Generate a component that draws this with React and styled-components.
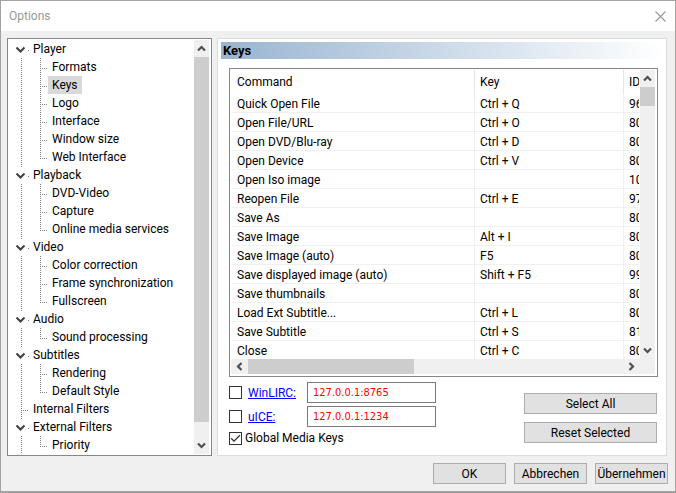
import React, { useState } from 'react'
import styled, { createGlobalStyle } from 'styled-components'

const GlobalStyle = createGlobalStyle`
  * {
    box-sizing: border-box;
  }
  body {
    margin: 0;
    background-color: #a3a09c;
    font-family: Roboto, 'Open Sans', sans-serif;
    font-size: 12px;
    line-height: 18px;
    color: black;
  }
`;
const Dialog = styled.main`
  display: flex;
  flex-direction: column;
  border: 1px solid #a5a3a2;
  background-color: #f0f0f0;
`;
const TitleBar = styled.header`
  display: flex;
  align-items: center;
  justify-content: space-between;
  height: 30px;
  padding: 0 9px 0 8px;
  background-color: white;
  color: #999999;
`;
const Title = styled.h1`
  margin: 0;
  font-size: 12px;
  font-weight: normal;
`;
const CloseButton = styled.button`
  display: flex;
  padding: 0;
  border: none;
  background: none;
`;
const Content = styled.div`
  display: flex;
  gap: 5px;
  padding: 7px 8px 7px 6px;
`;
const TreeBox = styled.nav`
  display: flex;
  flex: none;
  width: 205px;
  padding: 1px 2px 1px 0;
  border: 1px solid #828790;
  background-color: white;
`;
const TreeList = styled.ul`
  flex: 1;
  margin: 0;
  padding: 0;
  list-style: none;
`;
const TreeRow = styled.div`
  display: flex;
  height: 18px;
`;
const TreeLabel = styled.span`
  padding: 0 4px;
  white-space: nowrap;
  cursor: default;
  background-color: ${(props) => (props.$selected ? '#d9d9d9' : 'transparent')};
`;
const Panel = styled.section`
  display: flex;
  flex-direction: column;
  flex: 1;
  min-width: 0;
  padding: 3px;
  border: 1px solid #dcdcdc;
  background-color: white;
`;
const PanelTitle = styled.h2`
  margin: 0;
  padding: 0 2px;
  height: 17px;
  line-height: 18px;
  font-size: 13px;
  font-weight: bold;
  background: linear-gradient(to right, #99b4d1, #ffffff);
`;
const PanelBody = styled.div`
  display: flex;
  flex-direction: column;
  gap: 5px;
  padding: 9px 5px 0 8px;
`;
const ListBox = styled.div`
  display: grid;
  grid-template-columns: minmax(0, 1fr) 15px;
  padding: 1px 2px 2px 1px;
  border: 1px solid #828790;
`;
const TableClip = styled.div`
  height: 289px;
  margin-right: 1px;
  overflow: hidden;
`;
const Table = styled.table`
  width: 493px;
  table-layout: fixed;
  border-collapse: separate;
  border-spacing: 0;
`;
const HeadCell = styled.th`
  width: ${(props) => props.$width}px;
  height: 24px;
  padding: 0 5px 0 ${(props) => (props.$first ? 6 : 5)}px;
  border-right: 1px solid #e5e5e5;
  font-weight: normal;
  text-align: left;
`;
const Cell = styled.td`
  height: 19px;
  padding: 2px 5px 0 ${(props) => (props.$first ? 6 : 5)}px;
  border-right: 1px solid #f0f0f0;
  border-bottom: 1px solid #f0f0f0;
  line-height: 16px;
  white-space: nowrap;
`;
const ScrollTrack = styled.div`
  display: flex;
  flex: none;
  flex-direction: ${(props) => (props.$horizontal ? 'row' : 'column')};
  ${(props) => (props.$horizontal ? 'height: 15px;' : 'width: 15px;')}
  background-color: #f0f0f0;
`;
const ScrollButton = styled.button`
  display: flex;
  flex: none;
  align-items: center;
  justify-content: center;
  width: ${(props) => (props.$horizontal ? 17 : 15)}px;
  height: ${(props) => (props.$horizontal ? 15 : 17)}px;
  padding: 0;
  border: none;
  background: none;
`;
const ScrollSpace = styled.div`
  display: flex;
  flex: 1;
  flex-direction: ${(props) => (props.$horizontal ? 'row' : 'column')};
`;
const ScrollThumb = styled.div`
  flex: 0 0 ${(props) => props.$size};
  background-color: #cdcdcd;
`;
const Corner = styled.div`
  background-color: #f0f0f0;
`;
const Settings = styled.div`
  display: flex;
  justify-content: space-between;
`;
const Remotes = styled.div`
  display: flex;
  flex-direction: column;
  gap: 3px;
`;
const RemoteRow = styled.div`
  display: grid;
  grid-template-columns: 13px 53px 129px;
  column-gap: 6px;
  align-items: center;
`;
const CheckRow = styled.label`
  display: flex;
  align-items: center;
  gap: 3px;
  height: 16px;
`;
const CheckBox = styled.input`
  appearance: none;
  flex: none;
  width: 13px;
  height: 13px;
  margin: 0;
  border: 1px solid #333333;
  background-color: white;
  &:checked {
    background-image: url("data:image/svg+xml,%3Csvg xmlns='http://www.w3.org/2000/svg' viewBox='0 0 11 11'%3E%3Cpath d='M1.2 5.3l2.8 2.8L9.9 2.2' fill='none' stroke='%23333' stroke-width='1.3'/%3E%3C/svg%3E");
  }
`;
const RemoteLink = styled.a`
  color: #0000ff;
  text-decoration: underline;
`;
const Address = styled.input`
  min-width: 0;
  height: 21px;
  padding: 0 5px;
  border: 1px solid #7a7a7a;
  background-color: white;
  color: #ff0000;
  font-family: 'DejaVu Sans Condensed', 'DejaVu Sans', sans-serif;
  font-size: 11px;
`;
const Actions = styled.div`
  display: flex;
  flex-direction: column;
  gap: 8px;
  padding: 11px 1px 0 0;
`;
const Button = styled.button`
  width: ${(props) => props.$width}px;
  height: 21px;
  padding: 0;
  border: 1px solid #adadad;
  background-color: #e1e1e1;
  color: black;
  font-family: inherit;
  font-size: 12px;
  line-height: 18px;
`;
const Footer = styled.footer`
  display: flex;
  justify-content: flex-end;
  gap: 8px;
  padding: 0 7px 7px;
`;

const tree = [
  { name: 'Player', children: ['Formats', 'Keys', 'Logo', 'Interface', 'Window size', 'Web Interface'] },
  { name: 'Playback', children: ['DVD-Video', 'Capture', 'Online media services'] },
  { name: 'Video', children: ['Color correction', 'Frame synchronization', 'Fullscreen'] },
  { name: 'Audio', children: ['Sound processing'] },
  { name: 'Subtitles', children: ['Rendering', 'Default Style'] },
  { name: 'Internal Filters', children: [] },
  { name: 'External Filters', children: ['Priority'] },
];

const commands = [
  ['Quick Open File', 'Ctrl + Q', '96'],
  ['Open File/URL', 'Ctrl + O', '80'],
  ['Open DVD/Blu-ray', 'Ctrl + D', '80'],
  ['Open Device', 'Ctrl + V', '80'],
  ['Open Iso image', '', '10'],
  ['Reopen File', 'Ctrl + E', '97'],
  ['Save As', '', '80'],
  ['Save Image', 'Alt + I', '80'],
  ['Save Image (auto)', 'F5', '80'],
  ['Save displayed image (auto)', 'Shift + F5', '99'],
  ['Save thumbnails', '', '80'],
  ['Load Ext Subtitle...', 'Ctrl + L', '80'],
  ['Save Subtitle', 'Ctrl + S', '81'],
  ['Close', 'Ctrl + C', '80'],
];

const arrows = {
  up: 'M1 6.5L4.5 3L8 6.5',
  down: 'M1 2.5L4.5 6L8 2.5',
  left: 'M6.5 1L3 4.5L6.5 8',
  right: 'M2.5 1L6 4.5L2.5 8',
};

const Arrow = ({ direction }) => (
  <svg width="9" height="9" viewBox="0 0 9 9" fill="none" stroke="#505050" strokeWidth="2.2">
    <path d={arrows[direction]} />
  </svg>
)

// dotted connector lines in front of a top level item
const RootGutter = ({ first, leaf }) => (
  <svg width="21" height="18" fill="none" stroke="#808080" strokeDasharray="1 1">
    {leaf && <path d="M13.5 0V18M15 10.5H21" />}
    {!leaf && !first && <path d="M13.5 0V1" />}
    {!leaf && <path d="M20.5 10V11" />}
    {!leaf && <path d="M8.5 7.5L12.5 11.5L16.5 7.5" stroke="#404040" strokeWidth="2" strokeDasharray="none" />}
  </svg>
)

const ChildGutter = ({ last }) => (
  <svg width="40" height="18" fill="none" stroke="#808080" strokeDasharray="1 1">
    <path d="M13.5 0V18" />
    <path d={last ? 'M32.5 0V11' : 'M32.5 0V18'} />
    <path d="M34 10.5H41" />
  </svg>
)

const ScrollBar = ({ horizontal, size }) => (
  <ScrollTrack $horizontal={horizontal}>
    <ScrollButton $horizontal={horizontal} aria-label={horizontal ? 'Scroll left' : 'Scroll up'}>
      <Arrow direction={horizontal ? 'left' : 'up'} />
    </ScrollButton>
    <ScrollSpace $horizontal={horizontal}>
      <ScrollThumb $size={size} />
    </ScrollSpace>
    <ScrollButton $horizontal={horizontal} aria-label={horizontal ? 'Scroll right' : 'Scroll down'}>
      <Arrow direction={horizontal ? 'right' : 'down'} />
    </ScrollButton>
  </ScrollTrack>
)

const OptionsTree = () => {
  const [selected, setSelected] = useState('Keys')
  return (
    <TreeBox aria-label="Option pages">
      <TreeList>
        {tree.map((group, index) => (
          <li key={group.name}>
            <TreeRow>
              <RootGutter first={index === 0} leaf={group.children.length === 0} />
              <TreeLabel $selected={selected === group.name} onClick={() => setSelected(group.name)}>
                {group.name}
              </TreeLabel>
            </TreeRow>
            {group.children.length > 0 && (
              <TreeList>
                {group.children.map((child, i) => (
                  <li key={child}>
                    <TreeRow>
                      <ChildGutter last={i === group.children.length - 1} />
                      <TreeLabel $selected={selected === child} onClick={() => setSelected(child)}>
                        {child}
                      </TreeLabel>
                    </TreeRow>
                  </li>
                ))}
              </TreeList>
            )}
          </li>
        ))}
      </TreeList>
      <ScrollBar size="96%" />
    </TreeBox>
  )
}

const CommandList = () => (
  <ListBox>
    <TableClip>
      <Table>
        <thead>
          <tr>
            <HeadCell $width={244} $first>Command</HeadCell>
            <HeadCell $width={149}>Key</HeadCell>
            <HeadCell $width={100}>ID</HeadCell>
          </tr>
        </thead>
        <tbody>
          {commands.map(([name, key, id]) => (
            <tr key={name}>
              <Cell $first>{name}</Cell>
              <Cell>{key}</Cell>
              <Cell>{id}</Cell>
            </tr>
          ))}
        </tbody>
      </Table>
    </TableClip>
    <ScrollBar size="19px" />
    <ScrollBar horizontal size="166px" />
    <Corner />
  </ListBox>
)

const Remote = ({ id, label, address }) => (
  <RemoteRow>
    <CheckBox type="checkbox" aria-labelledby={id} />
    <span><RemoteLink id={id} href="#">{label}</RemoteLink></span>
    <Address type="text" defaultValue={address} aria-labelledby={id} />
  </RemoteRow>
)

const App = () => {
  return (
    <>
      <GlobalStyle />
      <Dialog>
        <TitleBar>
          <Title>Options</Title>
          <CloseButton aria-label="Close">
            <svg width="11" height="11" viewBox="0 0 11 11" stroke="#999999" strokeWidth="1.1">
              <path d="M0.5 0.5L10.5 10.5M10.5 0.5L0.5 10.5" />
            </svg>
          </CloseButton>
        </TitleBar>
        <Content>
          <OptionsTree />
          <Panel>
            <PanelTitle>Keys</PanelTitle>
            <PanelBody>
              <CommandList />
              <Settings>
                <Remotes>
                  <Remote id="winlirc" label="WinLIRC:" address="127.0.0.1:8765" />
                  <Remote id="uice" label="uICE:" address="127.0.0.1:1234" />
                  <CheckRow>
                    <CheckBox type="checkbox" defaultChecked />
                    Global Media Keys
                  </CheckRow>
                </Remotes>
                <Actions>
                  <Button $width={133}>Select All</Button>
                  <Button $width={133}>Reset Selected</Button>
                </Actions>
              </Settings>
            </PanelBody>
          </Panel>
        </Content>
        <Footer>
          <Button $width={73}>OK</Button>
          <Button $width={73}>Abbrechen</Button>
          <Button $width={73}>Übernehmen</Button>
        </Footer>
      </Dialog>
    </>
  )
}

export default App
